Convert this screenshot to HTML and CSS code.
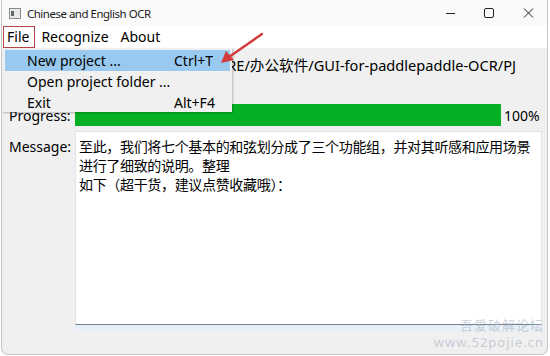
FILE: index.html
```html
<!DOCTYPE html>
<html lang="zh-CN">
  <head>
    <meta charset="UTF-8" />
    <title>Chinese and English OCR</title>
    <link rel="stylesheet" href="styles.css" />
  </head>
  <body>
    <div class="window">
      <!-- Title bar -->
      <div class="titlebar">
        <svg class="app-icon" width="12" height="11" viewBox="0 0 12 11">
          <rect x="0.5" y="0.5" width="11" height="10" fill="#e9e9e9" stroke="#8a8a8a" />
          <rect x="2" y="3" width="3" height="5" fill="#5d6b63" />
        </svg>
        <span class="title">Chinese and English OCR</span>
        <div class="controls">
          <svg width="46" height="26" viewBox="0 0 46 26">
            <line x1="29" y1="13.5" x2="38" y2="13.5" stroke="#222" stroke-width="1" />
          </svg>
          <svg width="38" height="26" viewBox="0 0 38 26">
            <rect x="21.5" y="8.5" width="9" height="9" rx="1.5" fill="none" stroke="#222" stroke-width="1" />
          </svg>
          <svg width="44" height="26" viewBox="0 0 44 26">
            <path d="M23 8.5 L32 17.5 M32 8.5 L23 17.5" stroke="#222" stroke-width="1" />
          </svg>
        </div>
      </div>

      <!-- Menu bar -->
      <div class="menubar">
        <span class="menu-title active">File</span>
        <span class="menu-title">Recognize</span>
        <span class="menu-title">About</span>
      </div>

      <!-- Main form -->
      <div class="content">
        <div class="row path-row">
          <span class="label">Path:</span>
          <span class="path">D:/Users/Lim/SOFTWARE/办公软件/GUI-for-paddlepaddle-OCR/PJ</span>
        </div>
        <div class="row progress-row">
          <span class="label">Progress:</span>
          <div class="progress">
            <div class="progress-fill" style="width: 100%"></div>
          </div>
          <span class="percent">100%</span>
        </div>
        <div class="row message-row">
          <span class="label">Message:</span>
          <div class="message">至此，我们将七个基本的和弦划分成了三个功能组，并对其听感和应用场景<br />进行了细致的说明。整理<br />如下（超干货，建议点赞收藏哦）：</div>
        </div>
      </div>

      <!-- Open File menu -->
      <div class="dropdown">
        <div class="item hover">
          <span>New project ...</span><span class="shortcut">Ctrl+T</span>
        </div>
        <div class="item">
          <span>Open project folder ...</span>
        </div>
        <div class="item">
          <span>Exit</span><span class="shortcut">Alt+F4</span>
        </div>
      </div>

      <svg class="pointer" width="50" height="40" viewBox="0 0 50 40">
        <line x1="45" y1="3" x2="12" y2="26" stroke="#d23a3c" stroke-width="2.4" stroke-linecap="round" />
        <path d="M4 32 L9 20 L17 29 Z" fill="#d23a3c" />
      </svg>

      <div class="watermark">
        <div>吾爱破解论坛</div>
        <div>www.52pojie.cn</div>
      </div>
    </div>
  </body>
</html>
```

FILE: styles.css
```css
* {
  margin: 0;
  padding: 0;
  box-sizing: border-box;
}

body {
  background: #ffffff;
  font-family: "Noto Sans", "Noto Sans CJK SC", sans-serif;
  color: #000000;
}

.window {
  position: relative;
  width: 547px;
  height: 355px;
  margin-left: 1px;
  background: #f0f0f0;
  border: 1px solid #c6c6c6;
  border-top: none;
  border-radius: 0 0 7px 7px;
  overflow: hidden;
}

/* Title bar */
.titlebar {
  display: flex;
  align-items: center;
  height: 26px;
  background: #fafafa;
}

.app-icon {
  margin: 0 6px 0 7px;
}

.title {
  font-size: 11.5px;
  letter-spacing: -0.5px;
  color: #1a1a1a;
}

.controls {
  display: flex;
  margin-left: auto;
  margin-right: 2px;
}

/* Menu bar */
.menubar {
  display: flex;
  align-items: center;
  height: 22px;
  background: #ffffff;
  font-size: 14px;
}

.menu-title {
  padding: 0 5px;
  line-height: 20px;
  border: 1px solid transparent;
}

.menu-title.active {
  margin-left: 1px;
  padding: 0 5px 0 3px;
  border: 1px solid #b4454b;
}

/* Form */
.content {
  display: flex;
  flex-direction: column;
  padding: 4px 5px 0 7px;
  font-size: 14px;
}

.row {
  display: flex;
  align-items: center;
}

.label {
  width: 66px;
  flex-shrink: 0;
}

.path-row {
  height: 24px;
}

.path {
  font-size: 14.6px;
  white-space: nowrap;
}

.progress-row {
  height: 22px;
  margin-top: 28px;
}

.progress {
  width: 426px;
  height: 22px;
  background: #e6e6e6;
}

.progress-fill {
  height: 100%;
  background: #06b025;
}

.percent {
  margin-left: 3px;
}

.message-row {
  align-items: flex-start;
  margin-top: 5px;
}

.message-row .label {
  margin-top: 6px;
}

.message {
  width: 468px;
  height: 194px;
  padding: 5px 3px;
  background: #ffffff;
  border: 1px solid #e4e4e4;
  border-bottom: 1px solid #6e8493;
  box-shadow: 0 6px 0 #e9eff6;
  font-family: "Noto Sans CJK SC", sans-serif;
  font-size: 14px;
  letter-spacing: -0.33px;
  line-height: 19px;
  white-space: nowrap;
}

/* Dropdown menu */
.dropdown {
  position: absolute;
  left: 0;
  top: 48px;
  width: 230px;
  height: 64px;
  padding: 2px 2px 0 3px;
  background: #f0f0f0;
  box-shadow: 1px 1px 2px rgba(0, 0, 0, 0.25);
  font-size: 14px;
}

.item {
  display: flex;
  align-items: center;
  height: 21px;
  padding-left: 22px;
}

.item.hover {
  background: #99c9ef;
}

.shortcut {
  margin-left: auto;
  width: 56px;
}

.pointer {
  position: absolute;
  left: 215px;
  top: 31px;
}

.watermark {
  position: absolute;
  right: 3px;
  bottom: 3px;
  font-size: 13px;
  line-height: 17px;
  letter-spacing: 1px;
  color: rgba(160, 172, 190, 0.55);
  text-align: right;
}
```
